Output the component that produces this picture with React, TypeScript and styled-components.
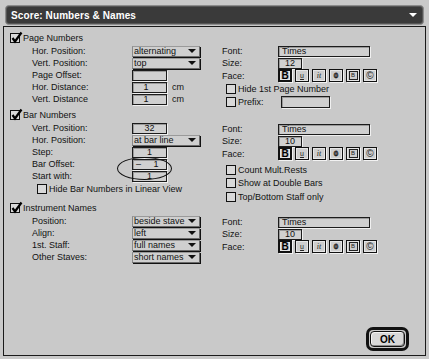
import React from "react";
import styled, { createGlobalStyle } from "styled-components";

const Global = createGlobalStyle`
  html, body { margin: 0; padding: 0; background: #c9c9c9; }
  body { font-family: "Liberation Sans", Arial, sans-serif; }
`;

const Window = styled.div`
  width: 429px;
  height: 359px;
  box-sizing: border-box;
  background: #c9c9c9;
  padding: 5px 3px 3px 3px;
  display: flex;
  flex-direction: column;
`;

const TitleBar = styled.div`
  margin: 0 2px 0 2px;
  height: 20px;
  box-sizing: border-box;
  background: #3a3a3a;
  border: 1px solid #8c8c8c;
  border-radius: 4px;
  box-shadow: inset 0 0 0 1px #555;
  color: #fff;
  display: flex;
  align-items: center;
  justify-content: space-between;
  padding: 0 6px 0 5px;
  font-family: "Liberation Sans", sans-serif;
  font-weight: bold;
  font-size: 10px;
  letter-spacing: 0.1px;
`;

const Body = styled.div`
  position: relative;
  margin-top: 1px;
  flex: 1;
  border: 1px solid #1a1a1a;
  padding: 4px 0 0 6px;
  display: flex;
  flex-direction: column;
  font-size: 9px;
  color: #111;
`;

const Section = styled.div<{ $height: number }>`
  display: grid;
  grid-template-columns: 212px 1fr;
  grid-template-rows: 14px 1fr;
  height: ${(p) => p.$height}px;
`;

const Header = styled.label`
  grid-column: 1 / 3;
  display: flex;
  align-items: center;
  gap: 3px;
  height: 14px;
`;

const Column = styled.div<{ $top?: number }>`
  display: flex;
  flex-direction: column;
  padding-top: ${(p) => p.$top ?? 0}px;
`;

const Row = styled.div<{ $indent?: number; $labelWidth: number }>`
  display: grid;
  grid-template-columns: ${(p) => p.$labelWidth}px auto auto;
  justify-content: start;
  align-items: center;
  column-gap: 5px;
  height: 12px;
  padding-left: ${(p) => p.$indent ?? 0}px;
`;

const Label = styled.span`
  white-space: nowrap;
  line-height: 12px;
`;

const Select = styled.div<{ $width: number }>`
  width: ${(p) => p.$width}px;
  height: 11px;
  box-sizing: border-box;
  border: 1px solid #6a6a6a;
  border-left-color: #8a8a8a;
  border-top-color: #9a9a9a;
  box-shadow: 1px 1px 0 #111;
  background: #cfcfcf;
  display: flex;
  align-items: center;
  justify-content: space-between;
  padding: 0 3px 0 1px;
  font-size: 9px;
  line-height: 9px;
  white-space: nowrap;
  overflow: hidden;
`;

const Arrow = styled.span<{ $color?: string }>`
  flex: none;
  width: 0;
  height: 0;
  border-left: 4px solid transparent;
  border-right: 4px solid transparent;
  border-top: 4px solid ${(p) => p.$color ?? "#111"};
`;

const Field = styled.div<{ $width: number; $align?: string }>`
  width: ${(p) => p.$width}px;
  height: 11px;
  box-sizing: border-box;
  border: 1px solid #1c1c1c;
  box-shadow: inset 1px 1px 0 #9a9a9a, 1px 1px 0 #f0f0f0;
  background: #d0d0d0;
  display: flex;
  align-items: center;
  justify-content: ${(p) => p.$align ?? "center"};
  padding: 0 3px;
  font-size: 9px;
  line-height: 9px;
  white-space: pre;
`;

const Unit = styled.span`
  line-height: 12px;
`;

const CheckRow = styled.label<{ $indent?: number; $height?: number }>`
  display: flex;
  align-items: center;
  gap: 2px;
  height: ${(p) => p.$height ?? 13.5}px;
  padding-left: ${(p) => p.$indent ?? 0}px;
  white-space: nowrap;
`;

const Box = styled.span`
  position: relative;
  width: 10px;
  height: 10px;
  box-sizing: border-box;
  border: 1px solid #111;
  background: #d9d9d9;
  flex: none;
`;

const CheckMark = styled.svg`
  position: absolute;
  left: 0px;
  top: -2px;
  overflow: visible;
`;

const Gap = styled.div<{ $h: number }>`
  height: ${(p) => p.$h}px;
  flex: none;
`;

const FaceRow = styled.div`
  display: grid;
  grid-template-columns: 56px auto;
  align-items: center;
  height: 13px;
`;

const FaceGroup = styled.div`
  display: flex;
  gap: 3px;
`;

const FaceButton = styled.span<{ $bold?: boolean }>`
  width: 14px;
  height: 13px;
  box-sizing: border-box;
  border: ${(p) => (p.$bold ? "2px" : "1px")} solid #111;
  box-shadow: inset 0 0 0 1px #e6e6e6, 1px 1px 0 #f2f2f2;
  background: #cdcdcd;
  display: flex;
  align-items: center;
  justify-content: center;
  font-family: "Liberation Sans", sans-serif;
  font-size: 8px;
  line-height: 8px;
  color: #222;
`;

const BoldB = styled.span`
  font-weight: 900;
  font-size: 10px;
  color: #000;
`;

const Under = styled.span`
  text-decoration: underline;
  font-size: 7px;
`;

const Ital = styled.span`
  font-style: italic;
  font-family: "Liberation Serif", serif;
  font-size: 8px;
`;

const Outline = styled.span`
  font-weight: bold;
  font-size: 8px;
  color: #cdcdcd;
  -webkit-text-stroke: 0.8px #222;
`;

const Shadowed = styled.span`
  width: 7px;
  height: 7px;
  border: 1px solid #222;
  font-size: 6px;
  line-height: 7px;
  text-align: center;
`;

const Copy = styled.span`
  font-size: 10px;
`;

const Ellipse = styled.div`
  position: absolute;
  left: 113px;
  top: 130px;
  width: 55px;
  height: 23px;
  box-sizing: border-box;
  border: 1.5px solid #111;
  border-radius: 50%;
  pointer-events: none;
`;

const Footer = styled.div`
  margin-top: auto;
  display: flex;
  justify-content: flex-end;
  padding: 0 16px 4px 0;
`;

const OkButton = styled.button`
  width: 43px;
  height: 24px;
  box-sizing: border-box;
  border: 3px solid #111;
  border-radius: 7px;
  padding: 1px;
  background: #c9c9c9;
  display: flex;
`;

const OkInner = styled.span`
  flex: 1;
  border: 1px solid #111;
  border-radius: 4px;
  background: #d8d8d8;
  box-shadow: inset -1px -1px 0 #888, inset 1px 1px 0 #f4f4f4;
  display: flex;
  align-items: center;
  justify-content: center;
  font-family: "Liberation Sans", sans-serif;
  font-weight: bold;
  font-size: 10px;
  color: #000;
`;

const Check: React.FC<{ checked?: boolean }> = ({ checked }) => (
  <Box>
    {checked && (
      <CheckMark width="11" height="11" viewBox="0 0 11 11">
        <path d="M1.5 6 L4 9.5 L10.5 0.5" fill="none" stroke="#000" strokeWidth="2.2" />
      </CheckMark>
    )}
  </Box>
);

const Faces: React.FC = () => (
  <FaceRow>
    <Label>Face:</Label>
    <FaceGroup>
      <FaceButton $bold><BoldB>B</BoldB></FaceButton>
      <FaceButton><Under>u</Under></FaceButton>
      <FaceButton><Ital>it</Ital></FaceButton>
      <FaceButton><Outline>0</Outline></FaceButton>
      <FaceButton><Shadowed>B</Shadowed></FaceButton>
      <FaceButton><Copy>©</Copy></FaceButton>
    </FaceGroup>
  </FaceRow>
);

const LeftRow: React.FC<{ label: string; children: React.ReactNode; unit?: string }> = ({
  label,
  children,
  unit,
}) => (
  <Row $indent={22} $labelWidth={95}>
    <Label>{label}</Label>
    {children}
    {unit && <Unit>{unit}</Unit>}
  </Row>
);

const RightRow: React.FC<{ label: string; children: React.ReactNode }> = ({ label, children }) => (
  <Row $labelWidth={51}>
    <Label>{label}</Label>
    {children}
  </Row>
);

export default function App() {
  return (
    <>
      <Global />
      <Window>
        <TitleBar>
          <span>Score: Numbers &amp; Names</span>
          <Arrow $color="#fff" />
        </TitleBar>
        <Body>
          <Section $height={77}>
            <Header>
              <Check checked />
              <span>Page Numbers</span>
            </Header>
            <Column>
              <LeftRow label="Hor. Position:">
                <Select $width={68}>alternating<Arrow /></Select>
              </LeftRow>
              <LeftRow label="Vert. Position:">
                <Select $width={68}>top<Arrow /></Select>
              </LeftRow>
              <LeftRow label="Page Offset:">
                <Field $width={35}></Field>
              </LeftRow>
              <LeftRow label="Hor. Distance:" unit="cm">
                <Field $width={35} $align="flex-start">{"   1"}</Field>
              </LeftRow>
              <LeftRow label="Vert. Distance" unit="cm">
                <Field $width={35} $align="flex-start">{"   1"}</Field>
              </LeftRow>
            </Column>
            <Column>
              <RightRow label="Font:">
                <Field $width={92} $align="flex-start">Times</Field>
              </RightRow>
              <RightRow label="Size:">
                <Field $width={24}>12</Field>
              </RightRow>
              <Faces />
              <CheckRow $indent={4}>
                <Check />
                <span>Hide 1st Page Number</span>
              </CheckRow>
              <CheckRow $indent={4}>
                <Check />
                <Label style={{ width: 41 }}>Prefix:</Label>
                <Field $width={49} style={{ height: 12 }}></Field>
              </CheckRow>
            </Column>
          </Section>

          <Section $height={93}>
            <Header>
              <Check checked />
              <span>Bar Numbers</span>
            </Header>
            <Column>
              <LeftRow label="Vert. Position:">
                <Field $width={35}>32</Field>
              </LeftRow>
              <LeftRow label="Hor. Position:">
                <Select $width={68}>at bar line<Arrow /></Select>
              </LeftRow>
              <LeftRow label="Step:">
                <Field $width={35}>1</Field>
              </LeftRow>
              <LeftRow label="Bar Offset:">
                <Field $width={35} $align="flex-start">{"–     1"}</Field>
              </LeftRow>
              <LeftRow label="Start with:">
                <Field $width={35}>1</Field>
              </LeftRow>
              <CheckRow $indent={27}>
                <Check />
                <span>Hide Bar Numbers in Linear View</span>
              </CheckRow>
            </Column>
            <Column $top={1}>
              <RightRow label="Font:">
                <Field $width={92} $align="flex-start">Times</Field>
              </RightRow>
              <RightRow label="Size:">
                <Field $width={24}>10</Field>
              </RightRow>
              <Faces />
              <Gap $h={3} />
              <CheckRow $indent={4}>
                <Check />
                <span>Count Mult.Rests</span>
              </CheckRow>
              <CheckRow $indent={4}>
                <Check />
                <span>Show at Double Bars</span>
              </CheckRow>
              <CheckRow $indent={4}>
                <Check />
                <span>Top/Bottom Staff only</span>
              </CheckRow>
            </Column>
          </Section>

          <Section $height={64}>
            <Header>
              <Check checked />
              <span>Instrument Names</span>
            </Header>
            <Column>
              <LeftRow label="Position:">
                <Select $width={68}>beside stave<Arrow /></Select>
              </LeftRow>
              <LeftRow label="Align:">
                <Select $width={68}>left<Arrow /></Select>
              </LeftRow>
              <LeftRow label="1st. Staff:">
                <Select $width={68}>full names<Arrow /></Select>
              </LeftRow>
              <LeftRow label="Other Staves:">
                <Select $width={68}>short names<Arrow /></Select>
              </LeftRow>
            </Column>
            <Column $top={1}>
              <RightRow label="Font:">
                <Field $width={92} $align="flex-start">Times</Field>
              </RightRow>
              <RightRow label="Size:">
                <Field $width={24}>10</Field>
              </RightRow>
              <Faces />
            </Column>
          </Section>

          <Ellipse />
          <Footer>
            <OkButton>
              <OkInner>OK</OkInner>
            </OkButton>
          </Footer>
        </Body>
      </Window>
    </>
  );
}
